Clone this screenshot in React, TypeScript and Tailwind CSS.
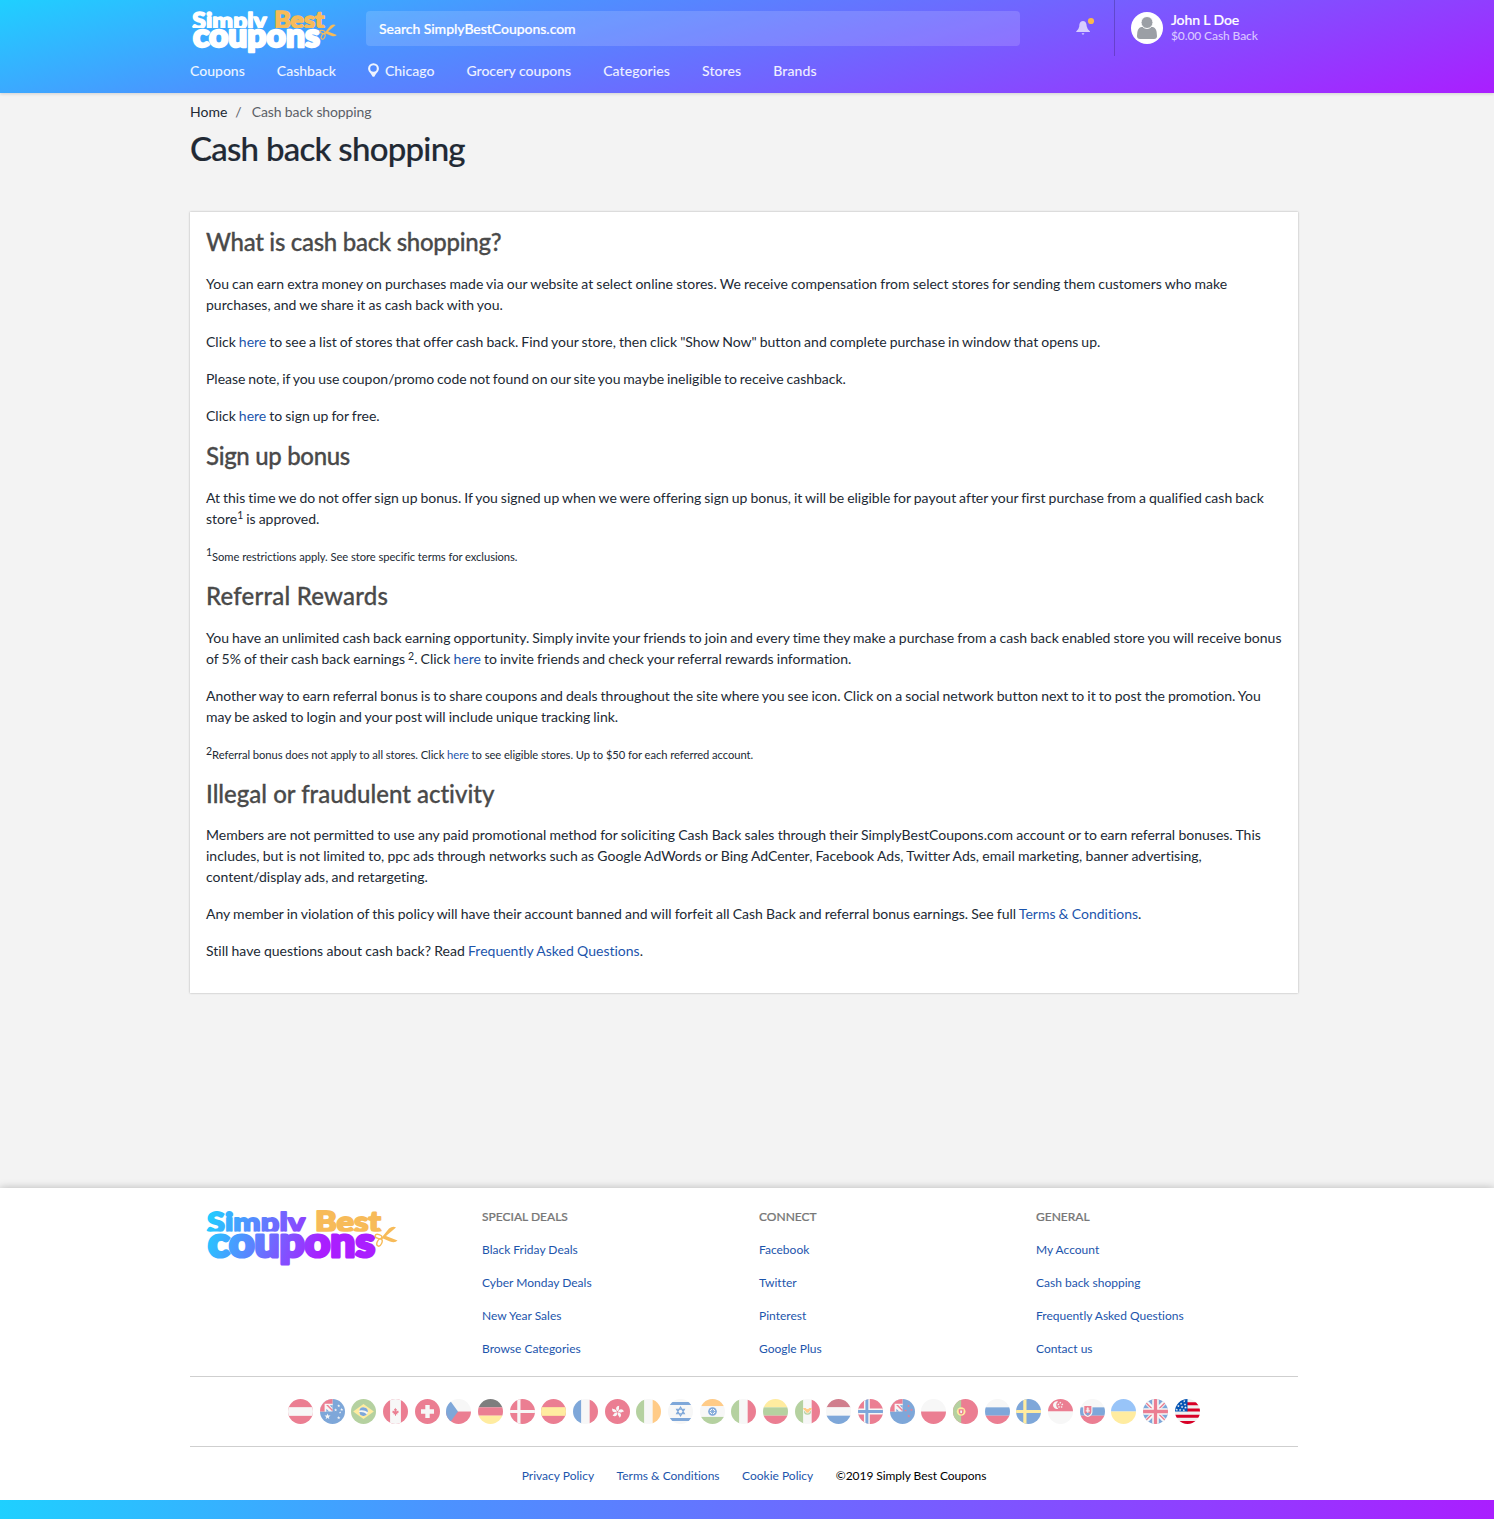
import React from "react";

const R = "#d80027";
const W = "#f0f0f0";
const B = "#0052b4";
const Y = "#ffda44";
const G = "#6da544";
const O = "#ff9811";

const rows = (...c: string[]) => c.map((f, i) => <rect key={i} y={(i * 512) / c.length} width="512" height={512 / c.length + 1} fill={f} />);
const cols = (...c: string[]) => c.map((f, i) => <rect key={i} x={(i * 512) / c.length} width={512 / c.length + 1} height="512" fill={f} />);
const band = (edge: string, mid: string) => (
  <>
    <rect width="512" height="512" fill={edge} />
    <rect y="167" width="512" height="178" fill={mid} />
  </>
);
const nordic = (bg: string, outer: string, inner?: string) => (
  <>
    <rect width="512" height="512" fill={bg} />
    <path d="M0 256H512M182 0V512" stroke={outer} strokeWidth={inner ? 120 : 66} />
    {inner && <path d="M0 256H512M182 0V512" stroke={inner} strokeWidth="60" />}
  </>
);
const star = (x: number, y: number, s: number, fill: string) => (
  <path
    key={`${x}-${y}`}
    transform={`translate(${x} ${y}) scale(${s})`}
    fill={fill}
    d="M0-10 2.4-3.2 9.5-3.1 3.9 1.2 5.9 8.1 0 4-5.9 8.1-3.9 1.2-9.5-3.1-2.4-3.2Z"
  />
);
const canton = (
  <>
    <rect width="256" height="256" fill={W} />
    <path d="M0 0H256V100H100V256H0Z" fill={R} />
    <path d="M96 96H256V124H124V256H96Z" fill={W} />
    <path d="M124 124H165L256 215V256Z" fill={R} />
    <path d="M200 130H256V186ZM130 200V256H186Z" fill={B} />
  </>
);

const flags: { name: string; art: React.ReactNode }[] = [
  { name: "Austria", art: band(R, W) },
  {
    name: "Australia",
    art: (
      <>
        <rect width="512" height="512" fill={B} />
        {canton}
        {star(154, 360, 6.5, W)}
        {star(383, 140, 3.4, W)}
        {star(320, 225, 3.4, W)}
        {star(445, 215, 3.4, W)}
        {star(383, 385, 3.8, W)}
        {star(412, 275, 2.4, W)}
      </>
    ),
  },
  {
    name: "Brazil",
    art: (
      <>
        <rect width="512" height="512" fill={G} />
        <path d="M256 100 467 256 256 412 45 256Z" fill={Y} />
        <circle cx="256" cy="256" r="89" fill={W} />
        <path d="M170 235A89 89 0 0 1 344 270Q270 215 170 235ZM168 270Q255 255 325 312A89 89 0 0 1 168 270Z" fill={B} />
      </>
    ),
  },
  {
    name: "Canada",
    art: (
      <>
        <rect width="512" height="512" fill={R} />
        <rect x="145" width="222" height="512" fill={W} />
        <path d="M289 290 334 267 312 256V234L267 256 289 211H267L256 178 234 211H222L245 256 200 234V256L178 267 222 290 211 312H245V345H267V312H301Z" fill={R} />
      </>
    ),
  },
  {
    name: "Switzerland",
    art: (
      <>
        <rect width="512" height="512" fill={R} />
        <path d="M389 211H301V123H211V211H123V301H211V389H301V301H389Z" fill={W} />
      </>
    ),
  },
  {
    name: "Czech Republic",
    art: (
      <>
        {rows(W, R)}
        <path d="M0 0H60L245 256 60 512H0Z" fill={B} />
      </>
    ),
  },
  { name: "Germany", art: rows("#000", R, Y) },
  { name: "Denmark", art: nordic(R, W) },
  { name: "Spain", art: band(R, Y) },
  { name: "France", art: cols(B, W, R) },
  {
    name: "Hong Kong",
    art: (
      <>
        <rect width="512" height="512" fill={R} />
        {[10, 82, 154, 226, 298].map((a) => (
          <path key={a} transform={`rotate(${a} 256 262)`} d="M256 250C195 215 205 145 272 133C258 170 300 190 256 250Z" fill={W} />
        ))}
      </>
    ),
  },
  { name: "Ireland", art: cols(G, W, O) },
  {
    name: "Israel",
    art: (
      <>
        <rect width="512" height="512" fill={W} />
        <path d="M0 62H512V124H0ZM0 388H512V450H0Z" fill={B} />
        <path d="M256 165 335 302H177ZM256 347 335 210H177Z" fill="none" stroke={B} strokeWidth="24" />
      </>
    ),
  },
  {
    name: "India",
    art: (
      <>
        <rect width="512" height="512" fill={W} />
        <rect width="512" height="144" fill={O} />
        <rect y="367" width="512" height="145" fill={G} />
        <circle cx="256" cy="256" r="89" fill={B} />
        <circle cx="256" cy="256" r="56" fill={W} />
        <path d="M256 190V322M190 256H322M210 210 302 302M302 210 210 302" stroke={B} strokeWidth="18" />
      </>
    ),
  },
  { name: "Italy", art: cols(G, W, R) },
  { name: "Lithuania", art: rows(Y, G, R) },
  {
    name: "Mexico",
    art: (
      <>
        {cols(G, W, R)}
        <path d="M165 185H220L256 225 292 185H347Q340 225 300 245H212Q172 225 165 185Z" fill={O} />
        <path d="M195 250A61 61 0 0 0 317 250" fill="none" stroke={G} strokeWidth="24" />
        <circle cx="256" cy="245" r="38" fill={O} />
      </>
    ),
  },
  { name: "Netherlands", art: rows("#a2001d", W, B) },
  { name: "Norway", art: nordic(R, W, B) },
  {
    name: "New Zealand",
    art: (
      <>
        <rect width="512" height="512" fill={B} />
        {canton}
        {star(380, 145, 3.2, R)}
        {star(320, 235, 3.2, R)}
        {star(440, 225, 3.2, R)}
        {star(385, 350, 3.8, R)}
      </>
    ),
  },
  { name: "Poland", art: rows(W, R) },
  {
    name: "Portugal",
    art: (
      <>
        <rect width="512" height="512" fill={R} />
        <rect width="167" height="512" fill={G} />
        <circle cx="167" cy="256" r="89" fill={Y} />
        <path d="M117 211H217V267A50 50 0 0 1 117 267Z" fill={R} />
        <path d="M148 236H186V272A19 19 0 0 1 148 272Z" fill={W} />
      </>
    ),
  },
  { name: "Russia", art: rows(W, B, R) },
  { name: "Sweden", art: nordic(B, Y) },
  {
    name: "Singapore",
    art: (
      <>
        {rows(R, W)}
        <path d="M210 50A80 80 0 1 0 210 200A88 88 0 0 1 210 50Z" fill={W} />
        {star(252, 75, 2.6, W)}
        {star(212, 110, 2.6, W)}
        {star(292, 110, 2.6, W)}
        {star(226, 162, 2.6, W)}
        {star(278, 162, 2.6, W)}
      </>
    ),
  },
  {
    name: "Slovakia",
    art: (
      <>
        {rows(W, B, R)}
        <path d="M66 145H255V265Q255 335 160 370Q66 335 66 265Z" fill={W} />
        <path d="M88 145H233V260Q233 310 160 342Q88 310 88 260Z" fill={R} />
        <path d="M160 170V295M130 205H190M118 243H202" stroke={W} strokeWidth="22" />
        <path d="M108 300Q160 260 212 300L160 342Z" fill={B} />
      </>
    ),
  },
  { name: "Ukraine", art: rows("#338af3", Y) },
  {
    name: "United Kingdom",
    art: (
      <>
        <rect width="512" height="512" fill={B} />
        <path d="M0 0 512 512M512 0 0 512" stroke={W} strokeWidth="90" />
        <path d="M60 75 210 225M452 75 302 225M60 437 210 287M452 437 302 287" stroke={R} strokeWidth="28" />
        <path d="M0 256H512M256 0V512" stroke={W} strokeWidth="134" />
        <path d="M0 256H512M256 0V512" stroke={R} strokeWidth="68" />
      </>
    ),
  },
  {
    name: "United States",
    art: (
      <>
        <rect width="512" height="512" fill={W} />
        <path d="M240 66H512V130H240ZM240 192H512V256H240ZM0 320H512V384H0ZM0 448H512V512H0Z" fill={R} />
        <rect width="256" height="256" fill={B} />
        {[[190, 45], [125, 95], [205, 110], [70, 145], [145, 165], [215, 175], [35, 220], [105, 225], [180, 230]].map(([x, y]) => star(x, y, 3, W))}
      </>
    ),
  },
];

function Logo({ className, dark }: { className: string; dark?: boolean }) {
  const main = dark ? "url(#brand)" : "#fff";
  const common = { fontFamily: "Lato, sans-serif", fontWeight: 900, strokeLinejoin: "round" as const };
  return (
    <svg viewBox="0 0 191 58" className={className} aria-label="Simply Best Coupons">
      <defs>
        <linearGradient id="brand" gradientUnits="userSpaceOnUse" x1="0" y1="10" x2="115" y2="45">
          <stop offset="0" stopColor="#1fd0ff" />
          <stop offset="1" stopColor="#aa1eff" />
        </linearGradient>
        <clipPath id="upper">
          <path d="M0-2H191V22.500H0Z" />
        </clipPath>
      </defs>
      <g {...common} fontSize="29" clipPath="url(#upper)">
        <text x="1" y="23.500" textLength="98" lengthAdjust="spacingAndGlyphs" fill={main} stroke={main} strokeWidth="1.800">Simply</text>
        <text x="109" y="22.500" textLength="66" lengthAdjust="spacingAndGlyphs" fill="#f7bb59" stroke="#f7bb59" strokeWidth="1.800">Best</text>
      </g>
      <text {...common} x="2" y="48" fontSize="42" textLength="167" lengthAdjust="spacingAndGlyphs" fill={main} stroke={main} strokeWidth="3.200">coupons</text>
      <g fill="none" stroke="#f7bb59" strokeWidth="1.400">
        <ellipse cx="172.500" cy="27.500" rx="3.500" ry="2" transform="rotate(15 172.500 27.500)" />
        <ellipse cx="173.500" cy="33.500" rx="2.300" ry="3.800" transform="rotate(25 173.500 33.500)" />
      </g>
      <path d="M174.500 30 183 19.500Q187 16.500 190 18.500L180 27 191.500 31.500Q189 34.500 184 32.500L177 29.500 175.500 31Z" fill="#f7bb59" />
    </svg>
  );
}

const A = ({ children }: { children: React.ReactNode }) => (
  <a href="#" className="text-[#1c55ac]">{children}</a>
);
const H = ({ children, className }: { children: React.ReactNode; className: string }) => (
  <h2 className={`text-[24px] leading-[28.8px] font-medium text-[#4a4a4a] [-webkit-text-stroke:0.3px_#4a4a4a] ${className}`}>{children}</h2>
);
const P = ({ children, className = "[word-spacing:-0.56px]" }: { children: React.ReactNode; className?: string }) => (
  <p className={`mb-4 ${className}`}>{children}</p>
);
const Sup = ({ children }: { children: React.ReactNode }) => (
  <sup className="relative -top-[0.4em] align-baseline text-[10.5px] leading-0">{children}</sup>
);

const linkColumns = [
  { title: "SPECIAL DEALS", links: ["Black Friday Deals", "Cyber Monday Deals", "New Year Sales", "Browse Categories"] },
  { title: "CONNECT", links: ["Facebook", "Twitter", "Pinterest", "Google Plus"] },
  { title: "GENERAL", links: ["My Account", "Cash back shopping", "Frequently Asked Questions", "Contact us"] },
];

function Header() {
  return (
    <header className="h-[93px] bg-[linear-gradient(165deg,#1fd0ff_0%,#4c92ff_30%,#aa1eff_100%)] shadow-[0_1px_3px_rgba(0,0,0,0.15)]">
      <div className="ml-[190px] w-[1108px]">
        <div className="flex h-[56px]">
          <Logo className="mt-[11px] ml-[1px] h-[44px] w-[146px] overflow-visible" />
          <div className="mt-[11px] ml-[29px] flex h-[35px] w-[654px] items-center rounded-[4px] bg-white/15 pl-[13px] font-medium tracking-[-0.03px] text-white [-webkit-text-stroke:0.2px_white]">
            Search SimplyBestCoupons.com
          </div>
          <svg viewBox="0 0 20 20" className="mt-[17px] ml-[55px] size-5">
            <path d="M8 4C5 4.3 4.4 6.5 4.3 9.3Q4 12 1.2 14.4V15H15V14.4Q12 12 11.700 9.300C11.500 6.500 11 4.300 8 4Z" fill="#fff" fillOpacity=".7" />
            <path d="M6.500 16.300H9.500L8 18Z" fill="#fff" fillOpacity=".7" />
            <circle cx="16" cy="4" r="3.100" fill="#fbb84d" />
          </svg>
          <div className="ml-[19px] flex border-l border-black/20 pl-4">
            <svg viewBox="0 0 32 32" className="mt-3 size-8">
              <circle cx="16" cy="16" r="16" fill="#fff" />
              <path d="M10 15H22Q26 16 26 24Q26 27 23 27H9Q6 27 6 24Q6 16 10 15Z" fill="#9b9fa5" />
              <circle cx="16" cy="10.500" r="6" fill="#9b9fa5" stroke="#fff" />
            </svg>
            <div className="mt-3 ml-2 font-medium text-white">
              <div className="text-[14px] leading-4 tracking-[-0.1px] [-webkit-text-stroke:0.2px_white]">John L Doe</div>
              <div className="text-[12px] leading-4 font-medium tracking-[-0.1px] text-white/70">$0.00 Cash Back</div>
            </div>
          </div>
        </div>
        <nav className="mt-1 flex gap-8 font-medium tracking-[0.01px] text-white/90">
          <a>Coupons</a>
          <a>Cashback</a>
          <a className="flex">
            <svg viewBox="0 0 12 15" className="mt-[3px] mr-[6px] h-[14px] w-[11px]">
              <path fillRule="evenodd" fill="currentColor" d="M6 0A5.900 5.900 0 0 0 .1 5.900C.1 9.300 3 10.600 4.700 14.300Q6 15.600 7.300 14.300C9 10.600 11.900 9.300 11.900 5.900A5.900 5.900 0 0 0 6 0ZM6 2.200A3.600 3.600 0 1 1 6 9.400A3.600 3.600 0 1 1 6 2.200Z" />
            </svg>
            Chicago
          </a>
          <a>Grocery coupons</a>
          <a className="tracking-[0.1px]">Categories</a>
          <a className="tracking-[0.08px]">Stores</a>
          <a className="tracking-[0.12px]">Brands</a>
        </nav>
      </div>
    </header>
  );
}

function Footer() {
  return (
    <footer className="h-[331px] bg-white text-[12px] leading-[18px] shadow-[0_0_8px_rgba(0,0,0,0.25)]">
      <div className="ml-[190px] w-[1108px]">
        <div className="flex h-[189px] border-b border-[#cfcfcf] pt-5">
          <div className="w-[277px] pl-4">
            <Logo dark className="mt-px h-[58px] w-[191px] overflow-visible" />
          </div>
          {linkColumns.map((c) => (
            <div key={c.title} className="flex w-[277px] flex-col gap-[15px] pl-[15px]">
              <div className="font-medium text-[#777] [-webkit-text-stroke:0.2px_#777]">{c.title}</div>
              {c.links.map((l) => (
                <A key={l}>{l}</A>
              ))}
            </div>
          ))}
        </div>
        <div className="flex h-[70px] justify-center border-b border-[#cfcfcf] pt-[22px]">
          <div className="flex w-[912px] justify-between">
            {flags.map((f, i) => (
              <svg key={f.name} viewBox="0 0 512 512" aria-label={f.name} className={i === flags.length - 1 ? "size-[25px] rounded-full" : "size-[25px] rounded-full opacity-50"}>
                {f.art}
              </svg>
            ))}
          </div>
        </div>
        <div className="flex h-[53px] justify-center gap-[22.5px] pt-5 pl-5 text-black">
          <A>Privacy Policy</A>
          <A>Terms &amp; Conditions</A>
          <A>Cookie Policy</A>
          <span className="tracking-[-0.06px]">©2019 Simply Best Coupons</span>
        </div>
      </div>
      <div className="h-[19px] bg-[linear-gradient(90deg,#1fd0ff_0%,#4c92ff_30%,#aa1eff_100%)]" />
    </footer>
  );
}

export default function App() {
  return (
    <div className="flex h-[1519px] w-full flex-col overflow-hidden bg-[#f3f3f3] font-[Lato,sans-serif] text-[14px] leading-[21px] text-[#212934] [font-variant-ligatures:none]">
      <Header />
      <main className="ml-[190px] w-[1108px] grow">
        <div className="flex pt-2">
          <span>Home</span>
          <span className="ml-2 text-[#5b6067]">/</span>
          <span className="ml-[10px] tracking-[-0.12px] text-[#5b6067]">Cash back shopping</span>
        </div>
        <h1 className="mt-[6px] text-[33px] leading-[40px] font-medium tracking-[-0.74px] [-webkit-text-stroke:0.2px_#212934]">Cash back shopping</h1>
        <section className="mt-[44px] h-[781px] w-[1108px] bg-white p-4 shadow-[0_0_2px_rgba(0,0,0,0.3)]">
          <H className="mb-4 tracking-[-0.29px]">What is cash back shopping?</H>
          <P className="[word-spacing:-0.42px]">
            You can earn extra money on purchases made via our website at select online stores. We receive compensation from select stores for sending them customers who make purchases, and we share it as cash back with you.
          </P>
          <P>Click <A>here</A> to see a list of stores that offer cash back. Find your store, then click "Show Now" button and complete purchase in window that opens up.</P>
          <P className="[word-spacing:-0.8px]">Please note, if you use coupon/promo code not found on our site you maybe ineligible to receive cashback.</P>
          <P>Click <A>here</A> to sign up for free.</P>
          <H className="mb-4 tracking-[-0.33px]">Sign up bonus</H>
          <P className="[word-spacing:-0.62px]">
            At this time we do not offer sign up bonus. If you signed up when we were offering sign up bonus, it will be eligible for payout after your first purchase from a qualified cash back store<Sup>1</Sup> is approved.
          </P>
          <P className="h-[21.4px] tracking-[-0.05px]"><Sup>1</Sup><small className="text-[11.2px]">Some restrictions apply. See store specific terms for exclusions.</small></P>
          <H className="mb-4 tracking-[0.2px]">Referral Rewards</H>
          <P className="[word-spacing:-0.5px]">
            You have an unlimited cash back earning opportunity. Simply invite your friends to join and every time they make a purchase from a cash back enabled store you will receive bonus of 5% of their cash back earnings <Sup>2</Sup>. Click <A>here</A> to invite friends and check your referral rewards information.
          </P>
          <P className="[word-spacing:-0.54px]">
            Another way to earn referral bonus is to share coupons and deals throughout the site where you see icon. Click on a social network button next to it to post the promotion. You may be asked to login and your post will include unique tracking link.
          </P>
          <P className="h-[21px] tracking-[-0.05px]"><Sup>2</Sup><small className="text-[11.2px]">Referral bonus does not apply to all stores. Click <A>here</A> to see eligible stores. Up to $50 for each referred account.</small></P>
          <H className="mb-[15.6px] tracking-[0px]">Illegal or fraudulent activity</H>
          <P className="[word-spacing:-0.34px]">
            Members are not permitted to use any paid promotional method for soliciting Cash Back sales through their SimplyBestCoupons.com account or to earn referral bonuses. This includes, but is not limited to, ppc ads through networks such as Google AdWords or Bing AdCenter, Facebook Ads, Twitter Ads, email marketing, banner advertising, content/display ads, and retargeting.
          </P>
          <P className="[word-spacing:-0.42px]">Any member in violation of this policy will have their account banned and will forfeit all Cash Back and referral bonus earnings. See full <A>Terms &amp; Conditions</A>.</P>
          <P className="[word-spacing:-0.3px]">Still have questions about cash back? Read <A>Frequently Asked Questions</A>.</P>
        </section>
      </main>
      <Footer />
    </div>
  );
}
